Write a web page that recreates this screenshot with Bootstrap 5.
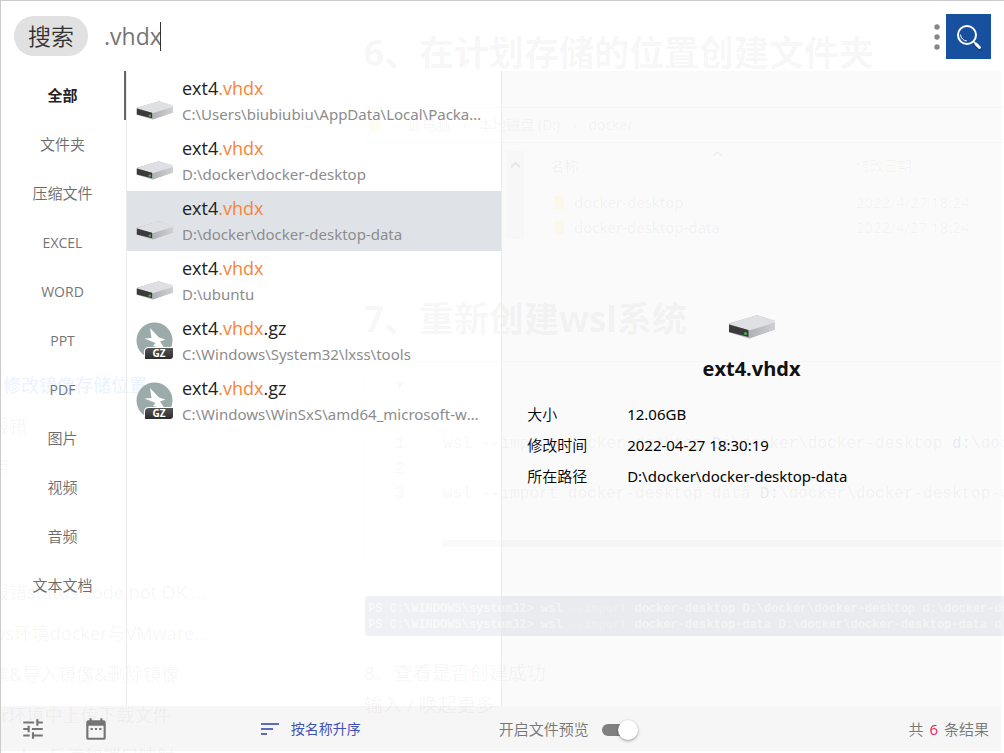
<!DOCTYPE html>
<html lang="zh-CN">
<head>
<meta charset="utf-8">
<meta name="viewport" content="width=device-width, initial-scale=1">
<title>搜索</title>
<link href="https://cdn.jsdelivr.net/npm/bootstrap@5.3.0/dist/css/bootstrap.min.css" rel="stylesheet">
<style>
:root{--side:126px;--line:#ebebeb;--muted:#6c6c6c}
body{font-family:"Open Sans","Noto Sans CJK SC",sans-serif;font-size:15px;line-height:24px;color:#000;background:#fff}
.window-frame{border-top:1px solid #ccc;border-left:1px solid #ccc;padding:0 3px 2px 0}
/* top bar */
.search-bar{height:70px;padding:0 10px 0 13px}
.tag-pill{background:#e1e1e1;color:#333;border-radius:20px;height:40px;font-size:23px;padding:0 14px;line-height:40px;font-weight:350}
.query-input{font-size:23px;height:40px;color:#757575;outline:0}
.text-caret{left:56px;top:6px;width:1px;height:29px;background:#333}
.menu-dots{width:18px;height:45px}
.go-btn{width:45px;height:45px;background:#1850a0}
/* categories */
.category-nav{width:var(--side);border-right:1px solid var(--line)}
.category-nav a{height:49px;line-height:49px;color:var(--muted);font-weight:350;border-right:2px solid transparent}
.category-nav a.latin{font-weight:400;font-size:14px;color:#757575}
.category-nav a.active{color:#222;font-weight:700;border-color:#666}
/* results */
.results-pane{flex:3 1 0;border-right:1px solid var(--line)}
.preview-pane{flex:4 1 0;background:rgba(0,0,0,.02)}
.result-item{height:60px;padding:4px 19px 4px 9px;line-height:26px;color:#222}
.result-item:hover{color:#222}
.result-item.selected{background:#dfe3e8}
.result-name{font-size:18px}
.result-name b{font-weight:400;color:#f58538}
.result-path{font-family:"Noto Sans",sans-serif;font-size:15px;color:#8c8c8c}
.file-icon{width:37px;height:38px;margin-right:9px}
/* preview */
.preview-body{padding-top:30px}
.preview-icon{width:46px;height:24px;margin-bottom:14px}
.preview-title{font-size:20px;line-height:32px;margin-bottom:14px;color:#111}
.facts{padding:0 25px;line-height:31px;display:grid;grid-template-columns:100px 1fr;font-family:"Noto Sans","Noto Sans CJK SC",sans-serif}
.facts dt{font-weight:350}
/* bottom bar */
.status-bar{height:45px;background:rgba(0,0,0,.035);color:#777;font-weight:350}
.tools{width:126px}
.sort-area{flex:3 1 0}
.info-area{flex:4 1 0;padding:0 12px 0 4px}
.sort-btn{font-size:14px;color:#3f51b5;gap:12px}
.preview-switch{appearance:none;width:35px;height:12px;border-radius:6px;background:#808080;position:relative;margin:2px 0 0 13px}
.preview-switch::before{content:"";position:absolute;top:-4px;left:0;width:20px;height:20px;border-radius:50%;background:#fff;box-shadow:0 1px 3px rgba(0,0,0,.4)}
.preview-switch:checked::before{left:16px}
.count{color:#e91e63;font-weight:400;margin:0 2px}
/* faint page visible through the translucent window */
.behind{color:rgba(0,0,0,.05);z-index:0;white-space:nowrap}
.front{z-index:1}
.behind-side{width:364px;padding-top:364px;margin-left:-10px;font-size:18px;line-height:41px;font-family:"Noto Sans","Noto Sans CJK SC",sans-serif}
.behind-side .blank{height:84px}
.behind-side .lit{color:#eaf3ff;padding-left:12px}
.behind-doc{margin-left:9px}
.doc-title{font-size:35px;font-weight:700;line-height:52px;margin:0;padding-top:26px}
.doc-title.next{padding-top:54px}
.crumbs{height:36px;margin-top:28px;border-top:1px solid rgba(0,0,0,.02);border-bottom:1px solid rgba(0,0,0,.02);gap:12px;font-size:14px;padding-left:6px}
.folder{width:10px;height:13px;background:rgba(255,215,80,.08)}
.explorer{padding-left:143px;height:88px;margin-top:8px}
.strip{width:17px;background:rgba(0,0,0,.01);text-align:center}
.files{padding-left:26px;width:444px;line-height:25px;font-size:15px;font-family:"Noto Sans","Noto Sans CJK SC",sans-serif}
.files .folder{margin:0 10px 0 4px}
.files .cols{font-size:14px;line-height:30px;margin-bottom:9px}
.files .date{width:112px;color:rgba(0,0,0,.035)}
.code-box{margin-top:16px;height:198px;border-left:1px solid rgba(0,0,0,.01);border-top:1px solid rgba(0,0,0,.01);font:16px/25px "Liberation Mono",monospace}
.code-box .fold{padding-left:31px;height:70px;line-height:48px;font-size:12px}
.code-box .ln{width:78px;padding-left:30px}
.code-box .opt{color:rgba(220,0,0,.06)}
.code-box .drv{color:rgba(0,90,220,.1)}
.bar-line{height:7px;margin-left:78px;border-radius:4px;background:rgba(0,0,0,.018);margin-top:-19px}
.terminal{margin:49px 0 0 1px;height:40px;padding:5px 3px;border-radius:4px;background:rgba(20,30,70,.065);color:rgba(255,255,255,.6);font:700 12px/16px "Liberation Mono",monospace}
.terminal i{font-style:normal;opacity:.5}
.doc-text{font-size:19px;line-height:32px;margin-top:21px}
</style>
</head>
<body>
<div class="window-frame vh-100 d-flex flex-column position-relative overflow-hidden">

  <div class="behind position-absolute top-0 start-0 w-100 h-100 d-flex overflow-hidden" aria-hidden="true">
    <div class="behind-side flex-shrink-0">
      <div class="lit">修改镜像存储位置</div><div>报错</div><div>用</div><div class="blank"></div>
      <div>报错status code not OK ...</div><div>ws环境docker与VMware...</div><div>像&amp;导入镜像&amp;删除镜像</div><div>er环境中上传下载文件</div><div>docker后添加端口映射</div>
    </div>
    <div class="behind-doc flex-grow-1">
      <p class="doc-title">6、在计划存储的位置创建文件夹</p>
      <div class="crumbs d-flex align-items-center"><span class="folder"></span><span>›</span><span>此电脑</span><span>›</span><span>本地磁盘 (D:)</span><span>›</span><span>docker</span></div>
      <div class="explorer d-flex">
        <div class="strip"><svg width="9" height="6" fill="none" stroke="#ececec" stroke-width="2"><path d="M0 5l4.500-4L9 5"/></svg></div>
        <div class="files">
          <div class="cols d-flex justify-content-between"><span>名称</span><svg width="9" height="6" fill="none" stroke="#ececec"><path d="M0 5l4.500-4L9 5"/></svg><span class="date">修改日期</span></div>
          <div class="d-flex align-items-center"><span class="folder"></span><span class="flex-grow-1">docker-desktop</span><span class="date">2022/4/27 18:24</span></div>
          <div class="d-flex align-items-center"><span class="folder"></span><span class="flex-grow-1">docker-desktop-data</span><span class="date">2022/4/27 18:24</span></div>
        </div>
      </div>
      <p class="doc-title next">7、重新创建wsl系统</p>
      <div class="code-box">
        <div class="fold">▼</div>
        <div class="d-flex"><span class="ln">1</span><span>wsl <span class="opt">--</span>import docker-desktop <span class="drv">D:</span>\docker\docker-desktop <span class="drv">d:</span>\docker\docker-desktop</span></div>
        <div class="d-flex"><span class="ln">2</span></div>
        <div class="d-flex"><span class="ln">3</span><span>wsl <span class="opt">--</span>import docker-desktop-data <span class="drv">D:</span>\docker\docker-desktop-data</span></div>
      </div>
      <div class="bar-line"></div>
      <div class="terminal"><div>PS C:\WINDOWS\system32&gt; wsl <i>--import</i> docker-desktop D:\docker\docker-desktop d:\docker-desktop</div><div>PS C:\WINDOWS\system32&gt; wsl <i>--import</i> docker-desktop-data D:\docker\docker-desktop-data d:\docker</div></div>
      <div class="doc-text">8、查看是否创建成功<br>输入 / 唤起更多</div>
    </div>
  </div>

  <header class="search-bar front d-flex align-items-center flex-shrink-0">
    <span class="tag-pill">搜索</span>
    <div class="position-relative flex-grow-1 ms-3">
      <input class="query-input w-100 border-0 bg-transparent p-0" type="text" value=".vhdx" aria-label="搜索">
      <span class="text-caret position-absolute"></span>
    </div>
    <button class="menu-dots border-0 bg-transparent p-0" type="button" aria-label="菜单"><svg class="d-block" width="18" height="45" fill="#888"><circle cx="9" cy="13" r="2.700"/><circle cx="9" cy="23" r="2.700"/><circle cx="9" cy="33" r="2.700"/></svg></button>
    <button class="go-btn border-0 p-0" type="button" aria-label="开始搜索"><svg class="d-block" width="45" height="45" fill="none" stroke="#fff" stroke-linecap="round"><path d="M29 30l5 5" stroke="#0b2f66" stroke-width="4" opacity=".5"/><circle cx="21" cy="21" r="9" stroke-width="2"/><path d="M14.500 21a6.500 6.500 0 0 0 6 6" stroke-width="1"/><path d="M28 28l2 2" stroke-width="1.500"/><path d="M30 30l3.500 3.500" stroke-width="3"/></svg></button>
  </header>

  <main class="front d-flex flex-grow-1">
    <nav class="category-nav flex-shrink-0 d-flex flex-column text-center">
      <a class="active text-decoration-none" href="#">全部</a>
      <a class="text-decoration-none" href="#">文件夹</a>
      <a class="text-decoration-none" href="#">压缩文件</a>
      <a class="latin text-decoration-none" href="#">EXCEL</a>
      <a class="latin text-decoration-none" href="#">WORD</a>
      <a class="latin text-decoration-none" href="#">PPT</a>
      <a class="latin text-decoration-none" href="#">PDF</a>
      <a class="text-decoration-none" href="#">图片</a>
      <a class="text-decoration-none" href="#">视频</a>
      <a class="text-decoration-none" href="#">音频</a>
      <a class="text-decoration-none" href="#">文本文档</a>
    </nav>

    <section class="results-pane overflow-hidden">
      <a class="result-item d-flex align-items-center text-decoration-none" href="#"><svg class="file-icon flex-shrink-0" viewBox="-1 -24 47 48"><use href="#drive"/></svg><span class="flex-grow-1 overflow-hidden"><span class="result-name d-block">ext4<b>.vhdx</b></span><span class="result-path d-block text-truncate">C:\Users\biubiubiu\AppData\Local\Packages\CanonicalGroup</span></span></a>
      <a class="result-item d-flex align-items-center text-decoration-none" href="#"><svg class="file-icon flex-shrink-0" viewBox="-1 -24 47 48"><use href="#drive"/></svg><span class="flex-grow-1 overflow-hidden"><span class="result-name d-block">ext4<b>.vhdx</b></span><span class="result-path d-block text-truncate">D:\docker\docker-desktop</span></span></a>
      <a class="result-item selected d-flex align-items-center text-decoration-none" href="#"><svg class="file-icon flex-shrink-0" viewBox="-1 -24 47 48"><use href="#drive"/></svg><span class="flex-grow-1 overflow-hidden"><span class="result-name d-block">ext4<b>.vhdx</b></span><span class="result-path d-block text-truncate">D:\docker\docker-desktop-data</span></span></a>
      <a class="result-item d-flex align-items-center text-decoration-none" href="#"><svg class="file-icon flex-shrink-0" viewBox="-1 -24 47 48"><use href="#drive"/></svg><span class="flex-grow-1 overflow-hidden"><span class="result-name d-block">ext4<b>.vhdx</b></span><span class="result-path d-block text-truncate">D:\ubuntu</span></span></a>
      <a class="result-item d-flex align-items-center text-decoration-none" href="#"><svg class="file-icon flex-shrink-0" viewBox="0 0 37 38"><use href="#archive"/></svg><span class="flex-grow-1 overflow-hidden"><span class="result-name d-block">ext4<b>.vhdx</b>.gz</span><span class="result-path d-block text-truncate">C:\Windows\System32\lxss\tools</span></span></a>
      <a class="result-item d-flex align-items-center text-decoration-none" href="#"><svg class="file-icon flex-shrink-0" viewBox="0 0 37 38"><use href="#archive"/></svg><span class="flex-grow-1 overflow-hidden"><span class="result-name d-block">ext4<b>.vhdx</b>.gz</span><span class="result-path d-block text-truncate">C:\Windows\WinSxS\amd64_microsoft-windows-lxss</span></span></a>
    </section>

    <section class="preview-pane d-flex flex-column justify-content-center">
      <div class="preview-body text-center">
        <svg class="preview-icon d-block mx-auto" viewBox="0 0 46 24"><use href="#drive"/></svg>
        <h1 class="preview-title fw-bold">ext4.vhdx</h1>
        <dl class="facts text-start mb-0">
          <dt>大小</dt><dd class="mb-0">12.06GB</dd>
          <dt>修改时间</dt><dd class="mb-0">2022-04-27 18:30:19</dd>
          <dt>所在路径</dt><dd class="mb-0">D:\docker\docker-desktop-data</dd>
        </dl>
      </div>
    </section>
  </main>

  <footer class="status-bar front d-flex align-items-center flex-shrink-0">
    <div class="tools d-flex">
      <button class="border-0 bg-transparent p-0 w-50" type="button" aria-label="设置"><svg width="26" height="26" viewBox="0 0 24 24" fill="#757575"><path d="M3 17v2h6v-2H3zM3 5v2h10V5H3zm10 16v-2h8v-2h-8v-2h-2v6h2zM7 9v2H3v2h4v2h2V9H7zm14 4v-2H11v2h10zm-6-4h2V7h4V5h-4V3h-2v6z"/></svg></button>
      <button class="border-0 bg-transparent p-0 w-50" type="button" aria-label="日期"><svg width="26" height="26" viewBox="0 0 24 24" fill="#757575"><path d="M9 11H7v2h2v-2zm4 0h-2v2h2v-2zm4 0h-2v2h2v-2zm2-7h-1V2h-2v2H8V2H6v2H5a2 2 0 0 0-2 2v14a2 2 0 0 0 2 2h14a2 2 0 0 0 2-2V6a2 2 0 0 0-2-2zm0 16H5V9h14v11z"/></svg></button>
    </div>
    <div class="sort-area text-center">
      <button class="sort-btn border-0 bg-transparent p-0 d-inline-flex align-items-center" type="button"><svg width="18" height="12" fill="#5c6bc0"><path d="M0 0h18v2H0zM0 5h12v2H0zM0 10h6v2H0z"/></svg>按名称升序</button>
    </div>
    <div class="info-area d-flex align-items-center">
      <label for="previewToggle">开启文件预览</label>
      <input class="preview-switch" id="previewToggle" type="checkbox" role="switch" checked>
      <span class="ms-auto">共 <span class="count">6</span> 条结果</span>
    </div>
  </footer>
</div>

<svg width="0" height="0" class="position-absolute" aria-hidden="true">
  <defs>
    <linearGradient id="side" x1="0" x2="1"><stop offset="0" stop-color="#b0b1b4"/><stop offset="1" stop-color="#cfd0d3"/></linearGradient>
    <linearGradient id="plate" x1="0" y1="0" x2="0" y2="1"><stop offset="0" stop-color="#555"/><stop offset="1" stop-color="#2c2c2c"/></linearGradient>
    <g id="drive">
      <path d="M0 8.500 27 .5q1-.4 2 0l17 5.500v8.500L20 23.500 0 17.500z" fill="#b4b5b8"/>
      <path d="M20 15 46 7v7.500L20 23.500z" fill="url(#side)"/>
      <path d="M0 9 26 .6q1.500-.5 3 0L46 5.500V7.500L20 15.500z" fill="#dfe0e4"/>
      <path d="M0 9.500 19.500 15v7L0 17z" fill="#3b3b3b"/>
      <circle cx="16.500" cy="18.500" r="1.500" fill="#35c23c"/>
    </g>
    <g id="archive">
      <circle cx="18.500" cy="18.500" r="18" fill="#9aabaa"/>
      <path d="M14 6 23 15.500 29.500 17.500 24 19.500 29 27 17 24 19.500 21 8.500 16.500 15.500 16z" fill="#fff"/>
      <path d="M13 25h24v13H8v-8q0-5 5-5z" fill="#fff"/>
      <path d="M13 26h24v8q0 3-3 3H9v-7q0-4 4-4z" fill="url(#plate)"/>
      <text x="23" y="35" text-anchor="middle" font-family="Open Sans" font-weight="700" font-size="10" fill="#fff">GZ</text>
    </g>
  </defs>
</svg>
<script src="https://cdn.jsdelivr.net/npm/bootstrap@5.3.0/dist/js/bootstrap.bundle.min.js"></script>
</body>
</html>
